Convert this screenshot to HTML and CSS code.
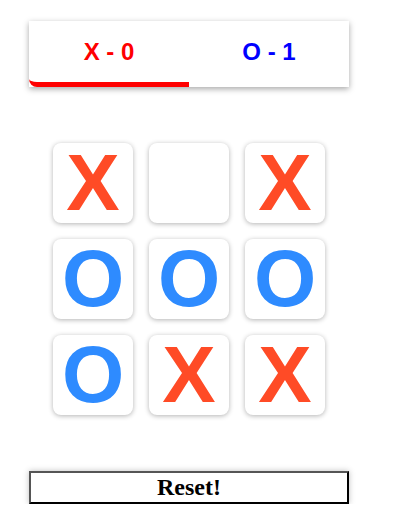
FILE: index.html
```html
<!DOCTYPE html>
<html lang="en">
<head>
<meta charset="utf-8">
<title>Tic Tac Toe</title>
<link rel="stylesheet" href="styles.css">
</head>
<body>
<div class="app">
  <div class="score">
    <div class="tab tab-x active">X - 0</div>
    <div class="tab tab-o">O - 1</div>
  </div>
  <div class="board">
    <div class="cell x">X</div>
    <div class="cell"></div>
    <div class="cell x">X</div>
    <div class="cell o">O</div>
    <div class="cell o">O</div>
    <div class="cell o">O</div>
    <div class="cell o">O</div>
    <div class="cell x">X</div>
    <div class="cell x">X</div>
  </div>
  <button class="reset">Reset!</button>
</div>
</body>
</html>
```
FILE: styles.css
```css
html, body {
  margin: 0;
  padding: 0;
  background: #ffffff;
}

.app {
  width: 320px;
  padding: 21px 0 0 29px;
  display: flex;
  flex-direction: column;
  align-items: center;
}

.score {
  width: 320px;
  height: 66px;
  display: flex;
  background: #ffffff;
  box-shadow: 0 2px 6px rgba(0, 0, 0, 0.35);
}

.tab {
  flex: 1;
  display: flex;
  align-items: center;
  justify-content: center;
  font-family: "Liberation Sans", Arial, sans-serif;
  font-weight: bold;
  font-size: 24px;
  border-bottom: 5px solid transparent;
}

.tab-x { color: #ff0000; }
.tab-o { color: #0000ff; }

.tab.active {
  border-bottom-color: #ff0000;
  border-bottom-left-radius: 8px;
}

.board {
  margin-top: 56px;
  display: grid;
  grid-template-columns: repeat(3, 80px);
  grid-auto-rows: 80px;
  gap: 16px;
}

.cell {
  background: #ffffff;
  border-radius: 8px;
  box-shadow: 0 1px 5px rgba(0, 0, 0, 0.3);
  font-family: "Liberation Sans", Arial, sans-serif;
  font-weight: bold;
  font-size: 80px;
  line-height: 80px;
  text-align: center;
}

.cell.x { color: #ff4b26; }
.cell.o { color: #2e8bff; }

.reset {
  margin-top: 56px;
  width: 320px;
  height: 33px;
  padding: 0;
  background: #ffffff;
  border-style: solid;
  border-width: 2px;
  border-color: #555555 #000000 #000000 #555555;
  box-shadow: 0 0 6px rgba(0, 0, 0, 0.25);
  font-family: "Liberation Serif", "Times New Roman", serif;
  font-weight: bold;
  font-size: 24px;
  color: #000000;
}
```
